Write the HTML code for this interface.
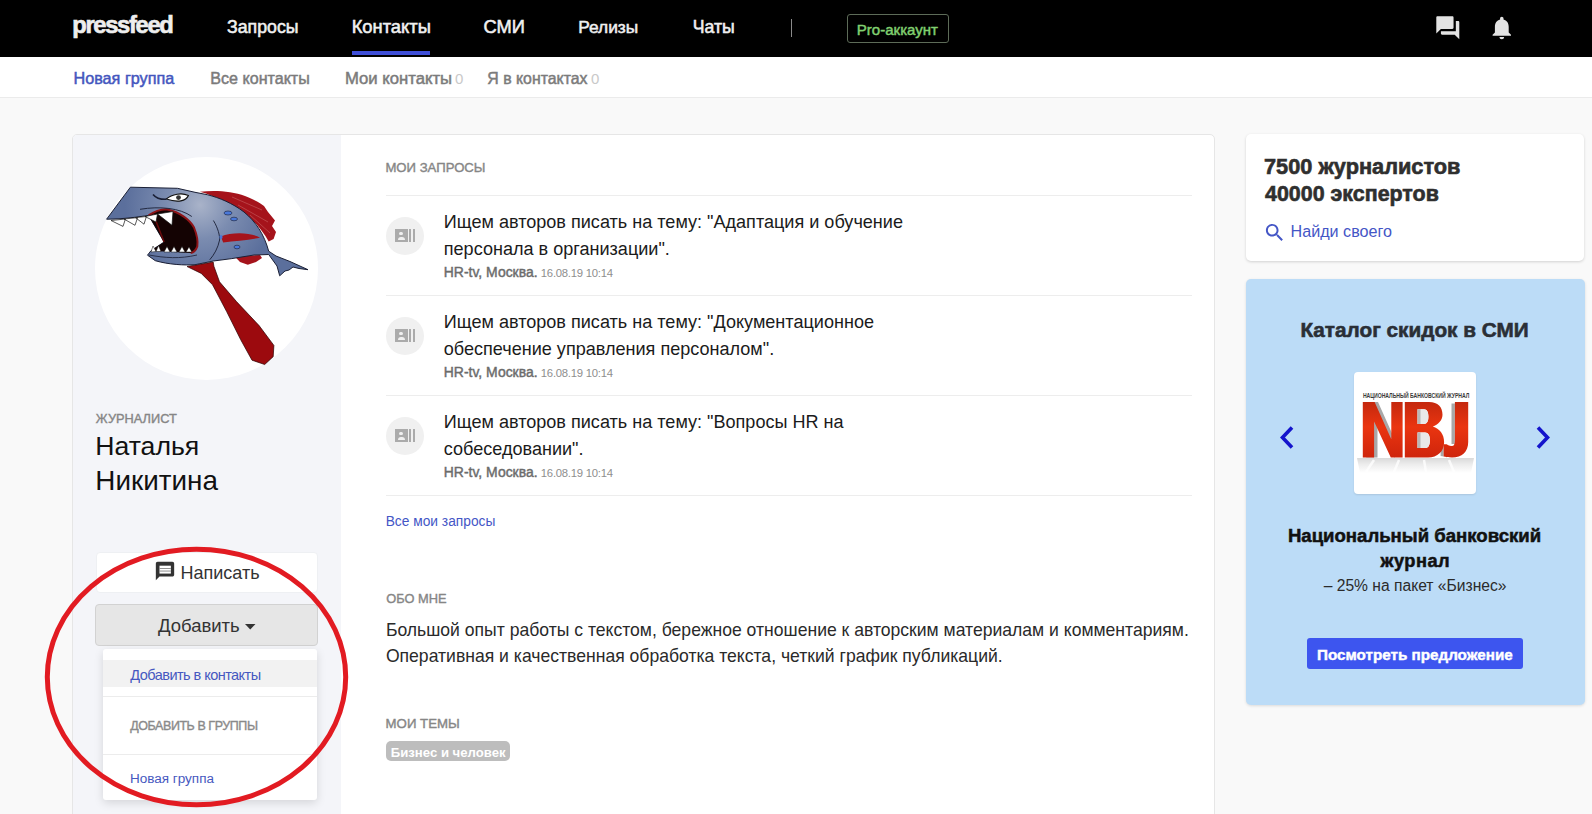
<!DOCTYPE html>
<html><head><meta charset="utf-8">
<style>
*{box-sizing:border-box;margin:0;padding:0}
html,body{width:1592px;height:814px;overflow:hidden;background:#f9f9f9;font-family:"Liberation Sans",sans-serif;color:#212121}
.a{position:absolute;white-space:nowrap;line-height:1}
.hr{position:absolute;height:1px;background:#ededed}
.qi{position:absolute;width:38px;height:38px;border-radius:50%;background:#f0f0f0}
.qi i{position:absolute;background:#ababab}
.qi b{position:absolute;background:#f0f0f0}
</style></head><body>
<div class="a" style="left:0;top:0;width:1592px;height:57px;background:#000"></div>
<div class="a" style="left:0;top:57px;width:1592px;height:41px;background:#fff;border-bottom:1px solid #ebebeb"></div>
<div class="a" style="left:352px;top:51px;width:78px;height:4px;background:#3f4fd8"></div>
<div class="a" style="left:791px;top:19px;width:1px;height:18px;background:#8a8a8a"></div>
<div class="a" style="left:847px;top:14px;width:102px;height:29px;border:1px solid #5d6b58;border-radius:3px"></div>
<svg class="a" style="left:1433.7px;top:13.6px" width="27.6" height="27.6" viewBox="0 0 24 24"><path fill="#e3e3e3" d="M21 6h-2v9H6v2c0 .55.45 1 1 1h11l4 4V7c0-.55-.45-1-1-1zm-4 6V3c0-.55-.45-1-1-1H3c-.55 0-1 .45-1 1v14l4-4h10c.55 0 1-.45 1-1z"/></svg>
<svg class="a" style="left:1488.2px;top:14px" width="27.6" height="27.6" viewBox="0 0 24 24"><path fill="#e3e3e3" d="M12 22c1.1 0 2-.9 2-2h-4c0 1.1.89 2 2 2zm6-6v-5c0-3.07-1.640-5.64-4.5-6.32V4c0-.83-.67-1.5-1.5-1.5s-1.5.67-1.5 1.5v.68C7.63 5.36 6 7.92 6 11v5l-2 2v1h16v-1l-2-2z"/></svg>

<div class="a" style="left:72px;top:134px;width:1143px;height:720px;background:#fff;border:1px solid #e6e6e6;border-radius:5px;overflow:hidden"><div style="position:absolute;left:0;top:0;width:268px;height:720px;background:#f4f5f9"></div></div>

<div class="a" style="left:94.5px;top:157px;width:223px;height:223px;border-radius:50%;background:#fff"></div>
<svg class="a" style="left:94px;top:157px" width="224" height="224" viewBox="94 157 224 224">
<defs>
<radialGradient id="bodyg" cx="200" cy="205" r="75" gradientUnits="userSpaceOnUse"><stop offset="0" stop-color="#a9b3c9"/><stop offset="0.45" stop-color="#7b8cb0"/><stop offset="1" stop-color="#5b6f9c"/></radialGradient>
</defs>
<path d="M187 266.5 L201.2 273.4 L212.5 284.7 L226.6 311.5 L240.7 339.7 L252 360.2 L264.7 364.5 L273.2 356.7 L273.9 345.4 L259.1 325.6 L236.5 301.6 L219.5 281.8 L213.9 266.3 L213.2 262 Z" fill="#9c0a0e" stroke="#2a0304" stroke-width="0.7"/>
<path d="M199.9 191.7 C215 190 232 191 245 196 C255 200 262 204 264 206 L268 212 L275 220.5 L272 226 L276 232 L273.6 239 L268.7 241.4 C262 230 252 218 244 214 C230 204 215 197 206 193.5 Z" fill="#a5131b"/>
<path d="M232 197 L262 210 M238 205 L268 222 M250 215 L270 233" stroke="#d88080" stroke-width="0.6" opacity="0.7"/>
<path d="M234.3 256 L260 255 L262 258 L256 262 L250 264 L247.8 264.7 L240 262 Z" fill="#a5131b"/>
<path d="M106.6 219.2 L130.4 187.2 L177.4 188.3 L195 192.3 L207.3 194.7 C220 198 232 203 244 212 C256 222 264 234 268.7 251.2 L276 256 L290 261.5 L308 269.7 L299 268.5 L293 267 L289 270 L285 271 L279.7 275.8 L277 266 L268.7 254.5 L254 255 L231.8 258.6 L213.4 261 L195 264.7 C185 265.5 168 264.5 155.3 260.7 L147.5 255.2 L150.9 250.8 L164.1 242 L148.6 215.4 C138 217 124 219 106.6 219.2 Z" fill="url(#bodyg)" stroke="#1a1f35" stroke-width="1"/>
<path d="M148.6 215.4 C155 211 160 209.5 166.3 209.3 C180 212 190 220 194 227.5 C197 235 198 242 197.3 246.3 C196 250 193 252.5 190.7 253 L150.9 250.8 L164.1 242 Z" fill="#140303"/>
<path d="M148.6 215.4 C155 211 160 209.5 166.3 209.3 C180 212 190 220 194 227.5 C197 235 198 242 197.3 246.3 C196 250 193 252.5 190.7 253" fill="none" stroke="#8e1418" stroke-width="2"/>
<path d="M153 213.5 L164.1 242" stroke="#6a0a0c" stroke-width="1.5"/>
<path d="M111 220.5 L125.4 219 L123 226.4 Z M124 219 L137.6 217.6 L135 225.3 Z M135.4 217.6 L146.4 216.5 L144 224.2 Z M145 216.5 L157.5 214 L156 222 Z M157.5 214 L173 211.5 L172 225.3 Z" fill="#fff" stroke="#111" stroke-width="0.7"/>
<path d="M151 252 L153 246 L156 251.5 Z M156 251.5 L158.5 245.5 L161 251.5 Z M164 252 L167 246.5 L170 252 Z M171 252 L174 246.5 L177 252 Z M179 252 L182 246.5 L185 252 Z M186 252 L189 247 L191.8 252 Z" fill="#fff" stroke="#111" stroke-width="0.5"/>
<path d="M166.3 199 C172 194 182 192.5 188.4 195.5 C186 201 178 203 166.3 199 Z" fill="#fff" stroke="#111" stroke-width="1.2"/>
<circle cx="178.5" cy="197.6" r="2.4" fill="#333"/>
<path d="M153 194.4 C156 198 161 199.5 166.3 199.3" fill="none" stroke="#1a1f35" stroke-width="1.6"/>
<path d="M140 209.3 C160 206 180 208 191.8 216.5" fill="none" stroke="#1a1f35" stroke-width="0.9"/>
<path d="M149 255 C165 258 180 259 197 255" fill="none" stroke="#1a1f35" stroke-width="0.8"/>
<path d="M220.8 236.5 C232 232 250 232 260 237.7 C250 240 235 241 223.2 242.6 Z" fill="#a5131b"/>
<path d="M213.4 220.5 C218 228 220 236 219.6 240 C218 248 214 255 209.7 259.8" fill="none" stroke="#1a1f35" stroke-width="0.9"/>
<ellipse cx="228" cy="213" rx="4" ry="2" fill="#4a78d8" stroke="#1a1f35" stroke-width="0.6"/>
<ellipse cx="234" cy="219" rx="3.5" ry="1.8" fill="#4a78d8" stroke="#1a1f35" stroke-width="0.6"/>
<ellipse cx="237" cy="247" rx="3" ry="1.8" fill="#4a78d8" stroke="#1a1f35" stroke-width="0.6"/>
<ellipse cx="221" cy="237" rx="1.6" ry="2" fill="#4a78d8"/>
</svg>


<div class="a" style="left:95.5px;top:551.5px;width:222px;height:41px;background:#fff;border-radius:4px;border:1px solid #eef0f3"></div>
<svg class="a" style="left:153.7px;top:560.3px" width="22" height="22" viewBox="0 0 24 24"><path fill="#333" d="M20 2H4c-1.1 0-2 .9-2 2v18l4-4h14c1.1 0 2-.9 2-2V4c0-1.1-.9-2-2-2z"/><rect x="6" y="6.2" width="12.4" height="8.6" fill="#fff"/><rect x="6" y="8.8" width="12.4" height="0.9" fill="#7a7a7a"/><rect x="6" y="11.6" width="12.4" height="0.9" fill="#7a7a7a"/></svg>
<div class="a" style="left:95.2px;top:604px;width:222.5px;height:41.5px;background:#e6e6e6;border:1px solid #d2d2d2;border-radius:4px"></div>
<svg class="a" style="left:245px;top:624px" width="11" height="6" viewBox="0 0 11 6"><path d="M0 0h10.5L5.25 5.6z" fill="#333"/></svg>

<div class="a" style="left:103px;top:648.5px;width:214.3px;height:151.8px;background:#fff;border-radius:3px;box-shadow:0 3px 10px rgba(0,0,0,0.13)"></div>
<div class="a" style="left:103px;top:660.3px;width:214.3px;height:26.7px;background:#f2f2f2"></div>
<div class="a" style="left:103px;top:696px;width:214.3px;height:1px;background:#ececec"></div>
<div class="a" style="left:103px;top:753.5px;width:214.3px;height:1px;background:#ececec"></div>

<div class="hr" style="left:386px;top:194.5px;width:806px"></div>
<div class="qi" style="left:386px;top:216.5px"><i style="left:9px;top:12.5px;width:12.6px;height:13px"></i><i style="left:23.2px;top:12.5px;width:1.8px;height:13px"></i><i style="left:26.6px;top:12.5px;width:2.4px;height:13px"></i><b style="left:13.4px;top:15px;width:3.8px;height:3.8px;border-radius:50%"></b><b style="left:11.5px;top:20.5px;width:7.6px;height:2.5px;border-radius:4px 4px 0 0"></b></div>
<div class="hr" style="left:386px;top:295px;width:806px"></div>
<div class="qi" style="left:386px;top:316.5px"><i style="left:9px;top:12.5px;width:12.6px;height:13px"></i><i style="left:23.2px;top:12.5px;width:1.8px;height:13px"></i><i style="left:26.6px;top:12.5px;width:2.4px;height:13px"></i><b style="left:13.4px;top:15px;width:3.8px;height:3.8px;border-radius:50%"></b><b style="left:11.5px;top:20.5px;width:7.6px;height:2.5px;border-radius:4px 4px 0 0"></b></div>
<div class="hr" style="left:386px;top:395px;width:806px"></div>
<div class="qi" style="left:386px;top:416.5px"><i style="left:9px;top:12.5px;width:12.6px;height:13px"></i><i style="left:23.2px;top:12.5px;width:1.8px;height:13px"></i><i style="left:26.6px;top:12.5px;width:2.4px;height:13px"></i><b style="left:13.4px;top:15px;width:3.8px;height:3.8px;border-radius:50%"></b><b style="left:11.5px;top:20.5px;width:7.6px;height:2.5px;border-radius:4px 4px 0 0"></b></div>
<div class="hr" style="left:386px;top:495px;width:806px"></div>
<div class="a" style="left:386.2px;top:741.2px;width:123.7px;height:19.6px;border-radius:5px;background:#bdbdbd"></div>

<div class="a" style="left:1245.6px;top:134px;width:338.6px;height:126.7px;background:#fff;border-radius:5px;box-shadow:0 1px 3px rgba(0,0,0,0.16)"></div>
<svg class="a" style="left:1263.3px;top:220.5px" width="23.3" height="23.3" viewBox="0 0 24 24"><path fill="#4456c6" d="M15.5 14h-.79l-.28-.27C15.41 12.59 16 11.11 16 9.5 16 5.91 13.09 3 9.5 3S3 5.91 3 9.5 5.91 16 9.5 16c1.61 0 3.09-.59 4.23-1.57l.27.28v.79l5 4.99L20.49 19l-4.99-5zm-6 0C7.01 14 5 11.99 5 9.5S7.01 5 9.5 5 14 7.01 14 9.5 11.99 14 9.5 14z"/></svg>

<div class="a" style="left:1245.8px;top:279.2px;width:338.8px;height:425.6px;background:#bcdcf7;border-radius:5px;box-shadow:0 1px 3px rgba(0,0,0,0.12)"></div>
<svg class="a" style="left:1278px;top:425px" width="18" height="25" viewBox="0 0 18 25"><polyline points="14,2.5 4.5,12.5 14,22.5" fill="none" stroke="#1414cc" stroke-width="3.6"/></svg>
<svg class="a" style="left:1533.5px;top:425px" width="18" height="25" viewBox="0 0 18 25"><polyline points="4,2.5 13.5,12.5 4,22.5" fill="none" stroke="#1414cc" stroke-width="3.6"/></svg>
<div class="a" style="left:1353.6px;top:372px;width:122.6px;height:122.2px;background:#fff;border-radius:4px;box-shadow:0 1px 2px rgba(0,0,0,0.1)"></div>
<svg class="a" style="left:1353.6px;top:372px" width="123" height="123" viewBox="0 0 123 123">
<defs>
<linearGradient id="refl" x1="0" y1="0" x2="0" y2="1"><stop offset="0" stop-color="#cdcdcd"/><stop offset="0.45" stop-color="#e8e8e8"/><stop offset="1" stop-color="#ffffff"/></linearGradient>
<linearGradient id="nbjr" x1="0" y1="0" x2="0" y2="1"><stop offset="0" stop-color="#c4280e"/><stop offset="0.45" stop-color="#ea3510"/><stop offset="1" stop-color="#cf250c"/></linearGradient>
</defs>
<text x="8.9" y="26" font-family="Liberation Sans" font-weight="bold" font-size="6.3" fill="#3a3a3a" textLength="106.5" lengthAdjust="spacingAndGlyphs">НАЦИОНАЛЬНЫЙ БАНКОВСКИЙ ЖУРНАЛ</text>
<path d="M3 86 L120 86 L117 101 L6 101 Z" fill="url(#refl)" opacity="0.75"/>
<path d="M20 88 L12 100 M45 88 L40 100 M70 88 L72 100 M95 88 L100 100" stroke="#fff" stroke-width="2.5" opacity="0.8"/>
<path d="M8.8 29.9 L20.6 29.9 L37.3 67.3 L37.3 85.5 L36.8 85.5 L20.1 49.6 L20.1 85.5 L8.8 85.5 Z" fill="#a8a8a8" transform="translate(3.4,0)"/>
<path d="M97.5 31.5 H100.9 V72 H97.5 Z M89.6 72.2 H86.6 V84 L89.6 84.5 Z" fill="#a8a8a8"/>
<path d="M63.6 37.3 H67 V52 H63.6 Z M63.6 60.4 H67 V76.1 H63.6 Z" fill="#b0b0b0"/>
<path fill="url(#nbjr)" d="M8.8 29.9 L20.6 29.9 L37.3 67.3 L37.3 29.9 L48.6 29.9 L48.6 85.5 L36.8 85.5 L20.1 49.6 L20.1 85.5 L8.8 85.5 Z"/>
<path fill="url(#nbjr)" d="M100.9 29.9 H114.2 V70 C114.2 80 108 85.4 98 85.4 C94 85.4 91.5 85 89.6 84.5 V72.2 H92.6 C95 73.8 97 74.1 98 74.1 C100 74.1 100.9 72 100.9 68.2 Z"/>
<path fill="url(#nbjr)" fill-rule="evenodd" d="M50.8 29.9 H75 C84 29.9 88.5 35 88.5 42.7 C88.5 48.5 84 52.5 78.8 54.5 C85.5 56.5 90.1 62 90.1 70.2 C90.1 79.5 83.5 85.4 74 85.4 H50.8 Z M63.6 37.3 H70 C73 37.3 74.4 40 74.4 44.6 C74.4 49.3 73 52 70 52 H63.6 Z M63.6 60.4 H71 C74.5 60.4 75.9 63.5 75.9 68.2 C75.9 73 74.5 76.1 71 76.1 H63.6 Z"/>
<path d="M63.6 37.3 H70 C73 37.3 74.4 40 74.4 44.6 C74.4 49.3 73 52 70 52 H63.6 Z M63.6 60.4 H71 C74.5 60.4 75.9 63.5 75.9 68.2 C75.9 73 74.5 76.1 71 76.1 H63.6 Z" fill="#e9e9e9"/>
<path d="M63.6 37.3 H66.5 V52 H63.6 Z M63.6 60.4 H66.5 V76.1 H63.6 Z" fill="#b8b8b8"/>
</svg>

<div class="a" style="left:1307px;top:638.2px;width:215.9px;height:30.5px;background:#3d55ef;border-radius:3px"></div>

<div class="a" style="left:72.3px;top:13.0px;font-size:23.75px;color:#eeeeee;font-weight:bold;-webkit-text-stroke:0.67px #eeeeee;letter-spacing:-1.34px">pressfeed</div>
<div class="a" style="left:227.0px;top:19.0px;font-size:17.74px;color:#f0f0f0;-webkit-text-stroke:0.53px #f0f0f0">Запросы</div>
<div class="a" style="left:351.7px;top:18.0px;font-size:18.33px;color:#f0f0f0;-webkit-text-stroke:0.55px #f0f0f0">Контакты</div>
<div class="a" style="left:483.6px;top:18.0px;font-size:18.27px;color:#f0f0f0;-webkit-text-stroke:0.55px #f0f0f0">СМИ</div>
<div class="a" style="left:578.3px;top:19.0px;font-size:17.31px;color:#f0f0f0;-webkit-text-stroke:0.52px #f0f0f0">Релизы</div>
<div class="a" style="left:692.7px;top:19.0px;font-size:17.69px;color:#f0f0f0;-webkit-text-stroke:0.53px #f0f0f0">Чаты</div>
<div class="a" style="left:856.8px;top:22.0px;font-size:15.06px;color:#80d070;-webkit-text-stroke:0.45px #80d070">Pro-аккаунт</div>
<div class="a" style="left:73.5px;top:69.9px;font-size:16.21px;color:#4456be;-webkit-text-stroke:0.49px #4456be">Новая группа</div>
<div class="a" style="left:210.3px;top:70.3px;font-size:16.08px;color:#7b7b7b;-webkit-text-stroke:0.48px #7b7b7b">Все контакты</div>
<div class="a" style="left:344.9px;top:71.3px;font-size:16.69px;color:#7b7b7b;-webkit-text-stroke:0.50px #7b7b7b">Мои контакты</div>
<div class="a" style="left:455.0px;top:71.0px;font-size:15px;color:#c9c9c9">0</div>
<div class="a" style="left:487.3px;top:71.3px;font-size:15.86px;color:#7b7b7b;-webkit-text-stroke:0.48px #7b7b7b">Я в контактах</div>
<div class="a" style="left:591.0px;top:71.0px;font-size:15px;color:#c9c9c9">0</div>
<div class="a" style="left:95.8px;top:412.7px;font-size:12.79px;color:#868686;-webkit-text-stroke:0.38px #868686">ЖУРНАЛИСТ</div>
<div class="a" style="left:95.3px;top:433.0px;font-size:26.61px;color:#111111">Наталья</div>
<div class="a" style="left:95.3px;top:466.7px;font-size:27.87px;color:#111111">Никитина</div>
<div class="a" style="left:180.5px;top:563.5px;font-size:18.03px;color:#333333">Написать</div>
<div class="a" style="left:158.0px;top:616.8px;font-size:18.49px;color:#333333">Добавить</div>
<div class="a" style="left:130.3px;top:667.5px;font-size:14.51px;color:#4658c0;letter-spacing:-0.54px">Добавить в контакты</div>
<div class="a" style="left:130.3px;top:720.2px;font-size:12.49px;color:#8a8a8a;-webkit-text-stroke:0.37px #8a8a8a;letter-spacing:-0.43px">ДОБАВИТЬ В ГРУППЫ</div>
<div class="a" style="left:129.9px;top:771.7px;font-size:13.52px;color:#4658c0">Новая группа</div>
<div class="a" style="left:385.4px;top:161.2px;font-size:13.15px;color:#868686;-webkit-text-stroke:0.39px #868686">МОИ ЗАПРОСЫ</div>
<div class="a" style="left:443.8px;top:213.2px;font-size:18.07px;color:#1b1b1b">Ищем авторов писать на тему: "Адаптация и обучение</div>
<div class="a" style="left:443.8px;top:239.5px;font-size:18.07px;color:#1b1b1b">персонала в организации".</div>
<div class="a" style="left:443.8px;top:266.2px;font-size:13.95px;color:#6b6b6b;-webkit-text-stroke:0.42px #6b6b6b">HR-tv, Москва.</div>
<div class="a" style="left:540.8px;top:268.2px;font-size:11.32px;color:#8e8e8e;letter-spacing:-0.25px">16.08.19 10:14</div>
<div class="a" style="left:443.8px;top:313.2px;font-size:18.07px;color:#1b1b1b">Ищем авторов писать на тему: "Документационное</div>
<div class="a" style="left:443.8px;top:339.5px;font-size:18.07px;color:#1b1b1b">обеспечение управления персоналом".</div>
<div class="a" style="left:443.8px;top:366.2px;font-size:13.95px;color:#6b6b6b;-webkit-text-stroke:0.42px #6b6b6b">HR-tv, Москва.</div>
<div class="a" style="left:540.8px;top:368.2px;font-size:11.32px;color:#8e8e8e;letter-spacing:-0.25px">16.08.19 10:14</div>
<div class="a" style="left:443.8px;top:413.2px;font-size:18.07px;color:#1b1b1b">Ищем авторов писать на тему: "Вопросы HR на</div>
<div class="a" style="left:443.8px;top:439.5px;font-size:18.07px;color:#1b1b1b">собеседовании".</div>
<div class="a" style="left:443.8px;top:466.2px;font-size:13.95px;color:#6b6b6b;-webkit-text-stroke:0.42px #6b6b6b">HR-tv, Москва.</div>
<div class="a" style="left:540.8px;top:468.2px;font-size:11.32px;color:#8e8e8e;letter-spacing:-0.25px">16.08.19 10:14</div>
<div class="a" style="left:385.7px;top:515.1px;font-size:13.77px;color:#4456c6">Все мои запросы</div>
<div class="a" style="left:386.3px;top:593.0px;font-size:12.84px;color:#868686;-webkit-text-stroke:0.39px #868686">ОБО МНЕ</div>
<div class="a" style="left:385.9px;top:622.0px;font-size:17.59px;color:#2a2a2a">Большой опыт работы с текстом, бережное отношение к авторским материалам и комментариям.</div>
<div class="a" style="left:385.9px;top:648.0px;font-size:17.59px;color:#2a2a2a">Оперативная и качественная обработка текста, четкий график публикаций.</div>
<div class="a" style="left:385.6px;top:717.0px;font-size:13.23px;color:#868686;-webkit-text-stroke:0.40px #868686">МОИ ТЕМЫ</div>
<div class="a" style="left:390.8px;top:746.0px;font-size:13.15px;color:#ffffff;font-weight:bold">Бизнес и человек</div>
<div class="a" style="left:1264.0px;top:155.7px;font-size:21.76px;color:#2f2f2f;font-weight:bold;-webkit-text-stroke:0.61px #2f2f2f">7500 журналистов</div>
<div class="a" style="left:1265.0px;top:184.0px;font-size:21.43px;color:#2f2f2f;font-weight:bold;-webkit-text-stroke:0.60px #2f2f2f">40000 экспертов</div>
<div class="a" style="left:1290.5px;top:222.8px;font-size:16.15px;color:#4456c6">Найди своего</div>
<div class="a" style="left:1300.4px;top:320.0px;font-size:20.75px;color:#2a2f36;font-weight:bold;-webkit-text-stroke:0.58px #2a2f36">Каталог скидок в СМИ</div>
<div class="a" style="left:1287.9px;top:527.2px;font-size:18.58px;color:#111111;font-weight:bold;-webkit-text-stroke:0.52px #111111">Национальный банковский</div>
<div class="a" style="left:1380.5px;top:552.3px;font-size:18.27px;color:#111111;font-weight:bold;-webkit-text-stroke:0.51px #111111;letter-spacing:0.46px">журнал</div>
<div class="a" style="left:1323.7px;top:578.3px;font-size:15.63px;color:#2b2b2b">– 25% на пакет «Бизнес»</div>
<div class="a" style="left:1317.0px;top:647.2px;font-size:15.22px;color:#ffffff;font-weight:bold;-webkit-text-stroke:0.43px #ffffff">Посмотреть предложение</div>

<svg class="a" style="left:0;top:500px" width="400" height="314" viewBox="0 500 400 314"><ellipse cx="196.5" cy="677" rx="149.2" ry="127.8" fill="none" stroke="#e21b22" stroke-width="5"/></svg>
</body></html>
